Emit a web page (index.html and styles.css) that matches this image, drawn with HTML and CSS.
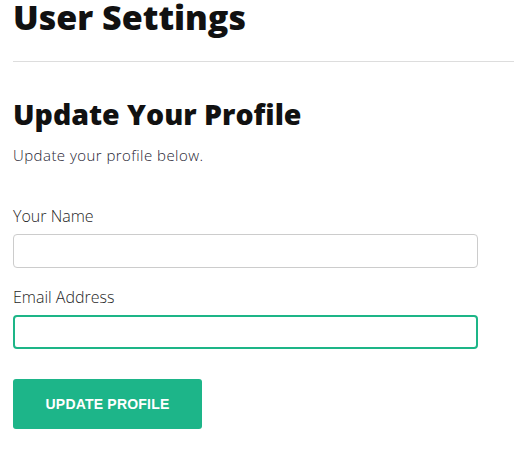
FILE: index.html
```html
<!DOCTYPE html>
<html lang="en">
<head>
<meta charset="utf-8">
<title>User Settings</title>
<link rel="stylesheet" href="styles.css">
</head>
<body>
<main class="page">
  <h1 class="page-title">User Settings</h1>
  <hr class="divider">
  <section class="profile">
    <h2 class="section-title">Update Your Profile</h2>
    <p class="section-sub">Update your profile below.</p>
    <form class="form">
      <div class="field">
        <label class="field-label" for="name">Your Name</label>
        <input class="field-input" id="name" type="text">
      </div>
      <div class="field">
        <label class="field-label" for="email">Email Address</label>
        <input class="field-input is-focused" id="email" type="email">
      </div>
      <button class="btn" type="button">Update Profile</button>
    </form>
  </section>
</main>
</body>
</html>
```
FILE: styles.css
```css
* { box-sizing: border-box; }
html, body { margin: 0; padding: 0; background: #fff; }
body {
  font-family: "Open Sans", "Liberation Sans", sans-serif;
  color: #222;
}
.page { padding-left: 13px; }
.page-title {
  margin: 0;
  font-size: 34px;
  line-height: 35px;
  font-weight: 800;
  color: #111;
}
.divider {
  margin: 26px 0 0 0;
  border: 0;
  border-top: 1px solid #ddd;
  height: 0;
}
.section-title {
  margin: 37px 0 0 0;
  font-size: 28.5px;
  line-height: 30px;
  font-weight: 800;
  color: #111;
}
.section-sub {
  margin: 16px 0 0 0;
  font-size: 15px;
  line-height: 20px;
  font-weight: 300;
  letter-spacing: 0.45px;
  color: #262433;
}
.form { margin-top: 41px; display: flex; flex-direction: column; align-items: flex-start; }
.field { display: flex; flex-direction: column; width: 465px; margin-bottom: 19px; }
.field-label {
  font-size: 16px;
  line-height: 20px;
  font-weight: 300;
  color: #1f1f1f;
  margin-bottom: 8px;
}
.field-input {
  height: 34px;
  width: 465px;
  border: 1px solid #ccc;
  border-radius: 4px;
  padding: 0 10px;
  font: inherit;
  outline: none;
  background: #fff;
}
.field-input.is-focused { border: 2px solid #1db587; }
.btn {
  margin-top: 11px;
  width: 189px;
  height: 50px;
  border: 0;
  border-radius: 3px;
  background: #1db589;
  color: #fff;
  font-family: "Liberation Sans", Arial, sans-serif;
  font-weight: 700;
  font-size: 14px;
  letter-spacing: 0.2px;
  text-transform: uppercase;
  padding: 0;
}
```
